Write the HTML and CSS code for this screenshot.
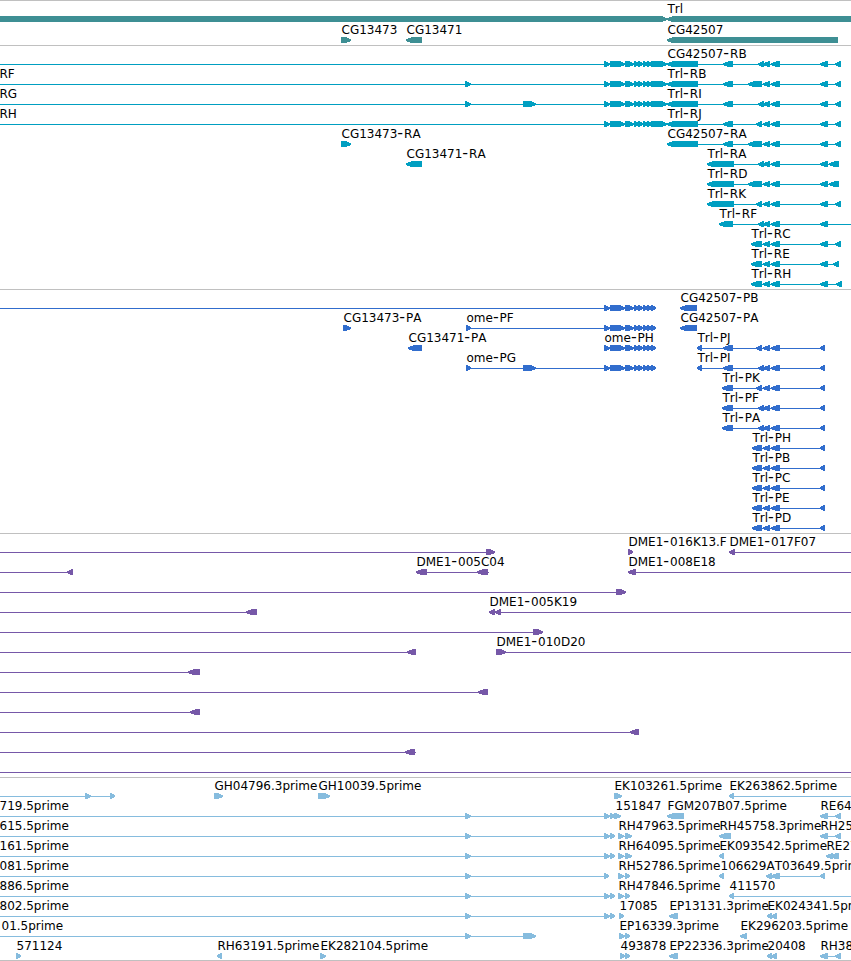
FILE: index.html
```
<!DOCTYPE html>
<html lang="en">
<head>
    <meta charset="UTF-8">
    <meta name="viewport" content="width=device-width, initial-scale=1.0">
    <title>Genome Browser</title>
    <link rel="stylesheet" href="styles.css">
</head>
<body>
    <main class="browser" id="browser"></main>
    <script src="tracks.js"></script>
</body>
</html>
```
FILE: styles.css
```
:root {
    --border: #c0c0c0;
    --gene: #3e8f94;
    --transcript: #009fc1;
    --protein: #316dcd;
    --bac: #7658a8;
    --est: #86bcde;
}

* {
    box-sizing: border-box;
    margin: 0;
    padding: 0;
}

body {
    background: white;
    font-family: 'DejaVu Sans', sans-serif;
    overflow: hidden;
}

.browser {
    display: flex;
    flex-direction: column;
    width: 851px;
    border-bottom: 1px solid var(--border);
}

.track {
    border-top: 1px solid var(--border);
}

.track-canvas {
    display: block;
    width: 100%;
}

.gene { fill: var(--gene); }
.transcript { fill: var(--transcript); }
.protein { fill: var(--protein); }
.bac { fill: var(--bac); }
.est { fill: var(--est); }

.feature {
    shape-rendering: crispEdges;
}

.label {
    fill: #000;
    font-size: 12px;
    font-kerning: none;
}

.dash {
    font-size: 16px;
    letter-spacing: 0.9px;
}
```
FILE: tracks.js
```
// Feature: [label, x, direction, line [start, end] or null, exons [[start, end], ...]]
const R = 1, L = -1, END = 860;

// exons of ome
const omeCds = [[604, 610], [610, 625], [625, 634], [634, 639], [638, 643], [643, 648], [647, 652], [651, 656]];
const omeExons = omeCds.slice(0, 7).concat([[651, 667]]);

// middle exons of Trl
const midA = [[758, 764], [763, 770], [771, 780]];
const midB = [[748, 762], [763, 770], [771, 780]];
const midC = [[756, 762], [763, 770], [771, 780]];
const midD = [[751, 762], [763, 770], [771, 780]];
const tail = [[820, 828], [835, 841]];

function ome(label, extra) {
    return [label, -1, R, [-10, 667], extra.concat(omeExons)];
}

function trl(label, first, middle, last) {
    const exons = first.concat(middle, last);
    return [label, exons[0][0], L, [exons[0][0] + 2, exons[exons.length - 1][1]], exons];
}

// one EST read running in from the left edge
function est(label, exons) {
    return [label, -1, R, [-10, exons[exons.length - 1][1]], [[465, 471]].concat(exons)];
}

function hit(label, dir, exons, labelX) {
    return [label, labelX || exons[0][0], dir, [exons[0][0] + 2, exons[exons.length - 1][1] - 2], exons];
}

const utr = [[667, 698], [723, 733]];
const pair = [[604, 610], [610, 615]];

const tracks = [
    { type: 'gene', height: 44, step: 21, rows: [
        [hit('', R, [[-10, 667]]), hit('Trl', L, [[667, END]])],
        [hit('CG13473', R, [[341, 351]]), hit('CG13471', L, [[406, 422]]), hit('CG42507', L, [[667, 838]])]
    ] },
    { type: 'transcript', height: 243, step: 20, rows: [
        [ome('', []), trl('CG42507-RB', utr, midA, tail)],
        [ome('RF', [[465, 471]]), trl('Trl-RB', utr, midB, tail)],
        [ome('RG', [[465, 471], [523, 536]]), trl('Trl-RI', utr, midA, tail)],
        [ome('RH', []), trl('Trl-RJ', utr, midC, tail)],
        [hit('CG13473-RA', R, [[341, 351]]), trl('CG42507-RA', utr, midB, tail)],
        [hit('CG13471-RA', L, [[406, 422]]), trl('Trl-RA', [[707, 734]], midA, [[820, 828], [829, 839]])],
        [trl('Trl-RD', [[707, 734]], midB, [[820, 828], [829, 839]])],
        [trl('Trl-RK', [[707, 734]], midC, tail)],
        [['Trl-RF', 719, L, [721, END], [[719, 733], ...midA, [820, 828]]]],
        [trl('Trl-RC', [], midD, tail)],
        [trl('Trl-RE', [], midD, [[820, 828], [833, 839]])],
        [trl('Trl-RH', [], midD, [[820, 828], [836, 842]])]
    ] },
    { type: 'protein', height: 243, step: 20, rows: [
        [['', 0, R, [-10, 656], omeCds], hit('CG42507-PB', L, [[680, 697]])],
        [hit('CG13473-PA', R, [[343, 351]]), hit('ome-PF', R, [[466, 471], ...omeCds]), hit('CG42507-PA', L, [[680, 697]])],
        [hit('CG13471-PA', L, [[408, 422]]), hit('ome-PH', R, omeCds), trl('Trl-PJ', [[697, 702], [723, 733]], midC, [[820, 825]])],
        [hit('ome-PG', R, [[466, 471], [523, 536], ...omeCds]), trl('Trl-PI', [[697, 702], [723, 733]], midA, [[820, 825]])],
        [trl('Trl-PK', [[722, 733]], midC, [[820, 825]])],
        [trl('Trl-PF', [[722, 733]], midA, [[820, 825]])],
        [trl('Trl-PA', [[722, 733]], midA, [[820, 825]])],
        ...['Trl-PH', 'Trl-PB', 'Trl-PC', 'Trl-PE', 'Trl-PD'].map(name => [
            trl(name, [[752, 762]], midD.slice(1), [[820, 825]])
        ])
    ] },
    { type: 'bac', height: 243, step: 20, rows: [
        [['', 0, R, [-10, 494], [[486, 495]]], hit('DME1-016K13.F', R, [[628, 633]]), ['DME1-017F07', 729, L, [731, END], [[729, 735]]]],
        [['', 0, L, [-10, 72], [[67, 73]]], ['DME1-005C04', 416, L, [418, 489], [[416, 427], [477, 488]]], ['DME1-008E18', 628, L, [630, END], [[628, 636]]]],
        [['', 0, R, [-10, 625], [[616, 626]]]],
        [['', 0, L, [-10, 256], [[246, 257]]], ['DME1-005K19', 489, L, [491, END], [[489, 495], [495, 501]]]],
        [['', 0, R, [-10, 542], [[533, 543]]]],
        [['', 0, L, [-10, 415], [[407, 416]]], ['DME1-010D20', 496, R, [498, END], [[496, 506]]]],
        [['', 0, L, [-10, 199], [[188, 200]]]],
        [['', 0, L, [-10, 487], [[478, 488]]]],
        [['', 0, L, [-10, 199], [[190, 200]]]],
        [['', 0, L, [-10, 638], [[630, 639]]]],
        [['', 0, L, [-10, 416], [[405, 415]]]],
        [['', 0, R, [-10, END], []]]
    ] },
    { type: 'est', height: 182, step: 20, rows: [
        [['', 0, R, [-10, 114], [[85, 91], [110, 115]]], hit('GH04796.3prime', R, [[214, 223]]), hit('GH10039.5prime', R, [[318, 330]]),
            hit('EK103261.5prime', R, [[614, 622]]), ['EK263862.5prime', 729, L, [731, END], [[729, 734]]]],
        [est('719.5prime', [...pair, [614, 621]]), ['151847', 615, R, null, []], hit('FGM207B07.5prime', L, [[667, 684]]), hit('RE64', L, tail)],
        [est('615.5prime', pair), hit('RH47963.5prime', R, [[618, 624], [625, 632]]), hit('RH45758.3prime', L, [[719, 731]]), hit('RH25', L, tail)],
        [est('161.5prime', pair), hit('RH64095.5prime', R, [[618, 624], [625, 632]]), hit('EK093542.5prime', L, [[719, 724]]), hit('RE27', L, [[826, 833], [830, 839]])],
        [est('081.5prime', [[604, 609]]), hit('RH52786.5prime', R, [[618, 624], [625, 630]]), hit('106629', L, [[719, 724]], 720),
            hit('AT03649.5prime', L, [[766, 772], [771, 780], [820, 825]])],
        [est('886.5prime', pair), hit('RH47846.5prime', R, [[618, 624], [625, 630]]), ['411570', 729, L, [731, END], [[729, 734]]]],
        [est('802.5prime', pair), hit('17085', R, [[619, 624]]), hit('EP13131.3prime', L, [[669, 678]]), hit('EK024341.5prime', L, [[767, 772], [771, 777]])],
        [['01.5prime', 1, R, [-10, 535], [[465, 471], [523, 536]]], hit('EP16339.3prime', R, [[619, 625], [625, 630]]), hit('EK296203.5prime', L, [[740, 747]])],
        [hit('571124', R, [[16, 21]]), hit('RH63191.5prime', L, [[217, 222]]), hit('EK282104.5prime', R, [[320, 326]]),
            hit('493878', R, [[620, 625], [625, 630]]), hit('EP22336.3prime', L, [[669, 678]]), hit('20408', L, [[767, 772], [771, 777]]), hit('RH38', L, tail)]
    ] }
];

// arrow-shaped box, 6px tall, pointing in the read direction
function arrow(start, end, dir, y) {
    const tip = Math.min(6, end - start - 1) * dir;
    const back = dir === R ? start : end;
    const front = dir === R ? end : start;
    const neck = front - tip;
    const bend = front - tip / 2;
    return `M${back} ${y - 3}H${neck}L${bend} ${y - 2}L${front} ${y - 0.5}V${y + 1}L${bend} ${y + 2.2}L${neck} ${y + 3}H${back}Z`;
}

function drawTrack(track) {
    let shapes = '', labels = '';
    track.rows.forEach((row, i) => {
        const y = 18 + i * track.step;
        row.forEach(([label, x, dir, line, exons]) => {
            if (line) {
                shapes += `<rect class="feature ${track.type}" x="${line[0]}" y="${y}" width="${line[1] - line[0]}" height="1"/>`;
            }
            exons.forEach(([start, end]) => {
                shapes += `<path class="feature ${track.type}" d="${arrow(start, end, dir, y)}"/>`;
            });
            if (label) {
                const text = label.replace('-', '<tspan class="dash">-</tspan>');
                labels += `<text class="label" x="${x + 0.5}" y="${y - 6}">${text}</text>`;
            }
        });
    });
    return `<section class="track"><svg class="track-canvas" height="${track.height}">${shapes}${labels}</svg></section>`;
}

document.getElementById('browser').innerHTML = tracks.map(drawTrack).join('');
```
